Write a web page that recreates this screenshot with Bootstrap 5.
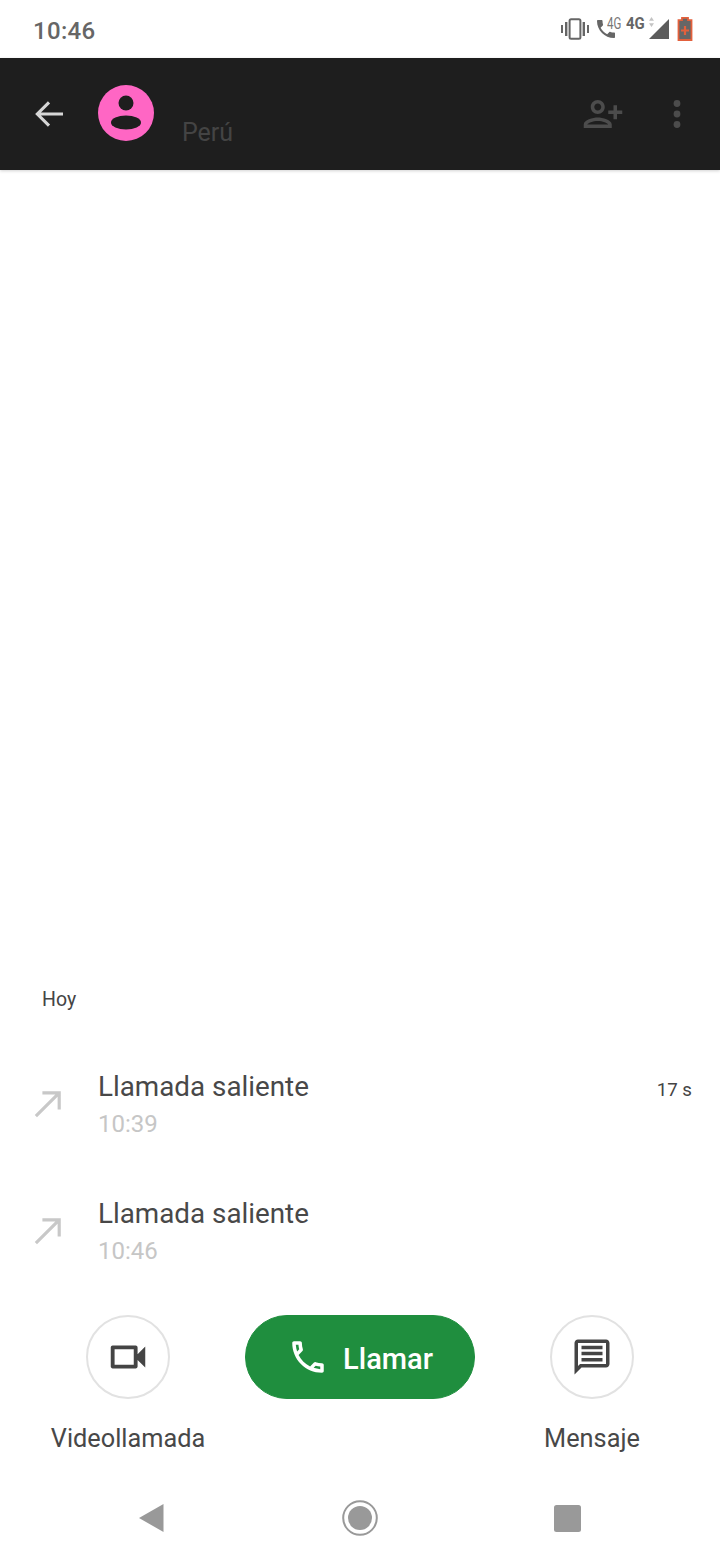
<!doctype html>
<html lang="es">

<head>
  <meta charset="utf-8">
  <meta name="viewport" content="width=device-width, initial-scale=1">
  <title>Detalle de llamada</title>
  <link href="https://cdn.jsdelivr.net/npm/bootstrap@5.3.3/dist/css/bootstrap.min.css" rel="stylesheet">
  <style>
    body {
      width: 720px;
      height: 1560px;
      overflow: hidden;
      background: #fff;
      font-family: Roboto, "Liberation Sans", sans-serif;
      color: #444;
    }

    .phone-screen {
      height: 1560px;
    }

    .status-bar {
      height: 58px;
      padding: 0 27px 0 33px;
    }

    .status-time {
      font-size: 24px;
      font-weight: 500;
      color: #666;
      letter-spacing: .3px;
      margin-top: 4px;
    }

    .status-tech {
      display: block;
      line-height: 1;
      transform-origin: left center;
    }

    .status-tech-small {
      width: 14px;
      margin-left: -11px;
      margin-bottom: 10px;
      font-size: 16px;
      font-weight: 400;
      color: #777;
      transform: scaleX(.72);
    }

    .status-tech-bold {
      width: 17px;
      margin-left: 5px;
      margin-bottom: 12px;
      font-size: 17px;
      font-weight: 700;
      color: #666;
      transform: scaleX(.88);
    }

    .signal-wrap {
      width: 20px;
      height: 20px;
      margin-left: 6px;
    }

    .signal-arrows {
      top: -2px;
      left: 0;
    }

    .top-header {
      height: 112px;
      background: #1e1e1e;
      box-shadow: 0 1px 3px rgba(0, 0, 0, .18);
      padding-left: 35px;
      padding-right: 36px;
    }

    .avatar-circle {
      width: 56px;
      height: 56px;
      margin-left: 35px;
      margin-top: -2px;
    }

    .place-label {
      font-size: 25px;
      line-height: 28px;
      color: #444;
      margin-left: 28px;
      padding-bottom: 23px;
    }

    .person-add {
      margin-left: auto;
    }

    .more-dots {
      margin-left: 46px;
    }

    .day-label {
      font-size: 19.500px;
      line-height: 22px;
      color: #444;
      padding-left: 42px;
      margin-bottom: 46px;
    }

    .call-row {
      height: 127px;
      padding: 12px 28px 0 34px;
    }

    .call-arrow {
      width: 28px;
      height: 28px;
      margin-top: 21px;
    }

    .call-body {
      margin-left: 36px;
    }

    .call-title {
      font-size: 27.800px;
      line-height: 36px;
      color: #484848;
    }

    .call-time {
      font-size: 24px;
      line-height: 36px;
      color: #c6c6c6;
      margin-top: 1px;
    }

    .call-length {
      font-size: 18.700px;
      line-height: 36px;
      color: #444;
      margin-top: 3px;
    }

    .action-bar {
      padding: 0 12px;
      margin-top: 4px;
    }

    .action-cell {
      width: 232px;
    }

    .round-action {
      width: 84px;
      height: 84px;
      border: 2px solid #e2e2e2;
      border-radius: 50%;
      background: #fff;
      padding: 0;
    }

    .call-pill {
      width: 230px;
      height: 84px;
      border-radius: 42px;
      background: #1f8e3e;
      border-color: #1f8e3e;
      color: #fff;
      font-size: 29px;
      font-weight: 500;
      gap: 14px;
      padding: 0;
    }

    .call-pill-text {
      padding-top: 5px;
    }

    .action-label {
      font-size: 25.300px;
      line-height: 32px;
      color: #484848;
      margin-top: 24px;
    }

    .nav-bar {
      height: 105px;
      padding-top: 21px;
    }

    .nav-cell {
      width: 209px;
    }

    .nav-square {
      margin-right: 4px;
    }
  </style>
</head>

<body>
  <div class="phone-screen d-flex flex-column">

    <div class="status-bar d-flex align-items-center justify-content-between">
      <span class="status-time">10:46</span>
      <div class="d-flex align-items-center">
        <svg width="28" height="22" viewBox="0 0 28 22" fill="#666">
          <rect x="0" y="7" width="2" height="8" />
          <rect x="4" y="4" width="2.400" height="14" />
          <rect x="21.600" y="4" width="2.400" height="14" />
          <rect x="26" y="7" width="2" height="8" />
          <rect x="8.600" y="1.200" width="10.800" height="19.600" rx="1.500" fill="none" stroke="#666" stroke-width="2" />
        </svg>
        <svg style="margin-left:5px" width="24" height="24" viewBox="0 0 24 24" fill="#666">
          <path d="M3 4c0 9.400 7.600 17 17 17 .6 0 1-.4 1-1v-3.500c0-.6-.4-1-1-1-1.200 0-2.400-.2-3.600-.6-.4-.1-.8 0-1 .2l-2.200 2.200c-2.800-1.400-5.100-3.800-6.600-6.600l2.200-2.200c.3-.3.4-.7.2-1C8.700 6.400 8.500 5.200 8.500 4c0-.6-.4-1-1-1H4c-.6 0-1 .4-1 1z" />
        </svg>
        <span class="status-tech status-tech-small">4G</span>
        <span class="status-tech status-tech-bold">4G</span>
        <div class="signal-wrap position-relative">
          <svg width="20" height="20" viewBox="0 0 20 20" fill="#5c5c5c" class="d-block">
            <path d="M20 0v20H0z" />
          </svg>
          <svg class="signal-arrows position-absolute" width="5" height="10" viewBox="0 0 6 12" fill="#c4c4c4">
            <path d="M3 0l3 4.500H0zM3 12L0 7.500h6z" />
          </svg>
        </div>
        <svg class="ms-2" width="16" height="24" viewBox="0 0 16 24">
          <path d="M5 .8h6v2.400h3.500v19.800H1.500V3.200H5z" fill="#666" stroke="#e2603c" stroke-width="1.800" />
          <path d="M8 9v9M4 13.500h8" stroke="#e2603c" stroke-width="2.200" fill="none" />
        </svg>
      </div>
    </div>

    <div class="top-header d-flex align-items-center">
      <svg width="28" height="28" viewBox="0 0 30 30" fill="none" stroke="#d6d6d6" stroke-width="3.300">
        <path d="M30 15H4M15 2.500L2.500 15 15 27.500" />
      </svg>
      <svg class="avatar-circle" viewBox="0 0 56 56">
        <circle cx="28" cy="28" r="28" fill="#ff66c4" />
        <circle cx="28" cy="18" r="7.500" fill="#1e1e1e" />
        <ellipse cx="28" cy="37.500" rx="15" ry="7" fill="#1e1e1e" />
      </svg>
      <span class="place-label align-self-end">Perú</span>
      <svg class="person-add" width="42" height="42" viewBox="0 0 24 24" fill="#4c4c4c">
        <g transform="translate(24 0) scale(-1 1)">
          <path d="M15 12c2.210 0 4-1.790 4-4s-1.790-4-4-4-4 1.790-4 4 1.790 4 4 4zm0-6c1.100 0 2 .9 2 2s-.9 2-2 2-2-.9-2-2 .9-2 2-2zm0 8c-2.670 0-8 1.340-8 4v2h16v-2c0-2.660-5.330-4-8-4zm-6 4c.22-.72 3.310-2 6-2 2.700 0 5.800 1.290 6 2H9zm-3-3v-3h3v-2H6V7H4v3H1v2h3v3h2z" />
        </g>
      </svg>
      <svg class="more-dots" width="14" height="30" viewBox="0 0 14 30" fill="#4c4c4c">
        <circle cx="7" cy="4.500" r="3.400" />
        <circle cx="7" cy="15" r="3.400" />
        <circle cx="7" cy="25.500" r="3.400" />
      </svg>
    </div>

    <div class="flex-grow-1"></div>

    <div class="day-label">Hoy</div>

    <div class="call-row d-flex">
      <svg class="call-arrow" viewBox="0 0 30 30" fill="none" stroke="#c8c8c8" stroke-width="3.400">
        <path d="M2 28L27 3M9 3h18v18" />
      </svg>
      <div class="call-body flex-grow-1">
        <div class="call-title">Llamada saliente</div>
        <div class="call-time">10:39</div>
      </div>
      <div class="call-length">17 s</div>
    </div>

    <div class="call-row d-flex">
      <svg class="call-arrow" viewBox="0 0 30 30" fill="none" stroke="#c8c8c8" stroke-width="3.400">
        <path d="M2 28L27 3M9 3h18v18" />
      </svg>
      <div class="call-body flex-grow-1">
        <div class="call-title">Llamada saliente</div>
        <div class="call-time">10:46</div>
      </div>
    </div>

    <div class="action-bar d-flex">
      <div class="action-cell d-flex flex-column align-items-center">
        <button class="btn round-action d-flex align-items-center justify-content-center" type="button">
          <svg width="46" height="46" viewBox="0 0 24 24" fill="#444">
            <path d="M15 8v8H5V8h10m1-2H4c-.55 0-1 .45-1 1v10c0 .55.45 1 1 1h12c.55 0 1-.45 1-1v-3.500l4 4v-11l-4 4V7c0-.55-.45-1-1-1z" />
          </svg>
        </button>
        <div class="action-label">Videollamada</div>
      </div>
      <div class="action-cell d-flex flex-column align-items-center">
        <button class="btn call-pill d-flex align-items-center justify-content-center" type="button">
          <svg width="42" height="42" viewBox="0 0 24 24" fill="#fff">
            <path d="M6.540 5c.06.89.21 1.760.45 2.590l-1.200 1.200c-.41-1.200-.67-2.470-.76-3.790h1.510m9.860 12.020c.85.24 1.720.39 2.600.45v1.490c-1.320-.09-2.590-.35-3.800-.75l1.200-1.190M7.500 3H4c-.55 0-1 .45-1 1 0 9.390 7.610 17 17 17 .55 0 1-.45 1-1v-3.490c0-.55-.45-1-1-1-1.240 0-2.450-.2-3.570-.57-.1-.04-.21-.05-.31-.05-.26 0-.51.1-.71.29l-2.200 2.200c-2.830-1.450-5.150-3.760-6.590-6.590l2.200-2.200c.28-.28.36-.67.25-1.020C8.700 6.450 8.500 5.250 8.500 4c0-.55-.45-1-1-1z" />
          </svg>
          <span class="call-pill-text">Llamar</span>
        </button>
      </div>
      <div class="action-cell d-flex flex-column align-items-center">
        <button class="btn round-action d-flex align-items-center justify-content-center" type="button">
          <svg width="42" height="42" viewBox="0 0 24 24" fill="#444">
            <path d="M20 2H4c-1.100 0-2 .9-2 2v18l4-4h14c1.100 0 2-.9 2-2V4c0-1.100-.9-2-2-2zm0 14H5.170L4 17.170V4h16v12z" />
            <path d="M6 5.500h12v2H6zM6 9h12v2H6zM6 12.500h12v2H6z" />
          </svg>
        </button>
        <div class="action-label">Mensaje</div>
      </div>
    </div>

    <div class="nav-bar d-flex align-items-center justify-content-center">
      <div class="nav-cell d-flex justify-content-center">
        <svg width="26" height="30" viewBox="0 0 26 30" fill="#999">
          <path d="M25.500 1v28L1 15z" />
        </svg>
      </div>
      <div class="nav-cell d-flex justify-content-center">
        <svg width="36" height="36" viewBox="0 0 36 36">
          <circle cx="18" cy="18" r="16.800" fill="none" stroke="#999" stroke-width="2" />
          <circle cx="18" cy="18" r="12" fill="#999" />
        </svg>
      </div>
      <div class="nav-cell d-flex justify-content-center">
        <svg class="nav-square" width="27" height="27" viewBox="0 0 27 27" fill="#999">
          <rect width="27" height="27" rx="2.500" />
        </svg>
      </div>
    </div>

  </div>
  <script src="https://cdn.jsdelivr.net/npm/bootstrap@5.3.3/dist/js/bootstrap.bundle.min.js"></script>
</body>

</html>
